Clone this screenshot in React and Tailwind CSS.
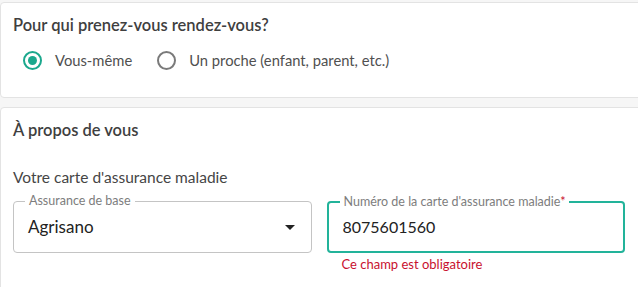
import React from 'react';

const Radio = ({ checked, label }) => (
  <label className="flex items-center gap-[13px]">
    <span className={"flex h-[19px] w-[19px] items-center justify-center rounded-full border-2 " + (checked ? "border-[#1ba88d]" : "border-[#7a7a7a]")}>
      {checked && <span className="h-[9px] w-[9px] rounded-full bg-[#1ba88d]" />}
    </span>
    <span className="text-[14.75px] text-[#505050]">{label}</span>
  </label>
);

const OutlinedField = ({ label, required, focused, children }) => (
  <div className="flex-1">
    <div className={"relative flex h-[52px] items-center rounded-[4px] px-[14px] " + (focused ? "border-2 border-[#22b39a]" : "border border-[#c4c4c4]")}>
      <span className="absolute left-[11px] top-[-9px] bg-white px-[4px] text-[12.5px] leading-[16px] text-[#7d7d7d]">
        {label}
        {required && <span className="text-[#c8102e]">*</span>}
      </span>
      {children}
    </div>
  </div>
);

const App = () => {
  return (
    <div className="h-[287px] w-[638px] overflow-hidden bg-[#f6f6f6] pt-[2px] font-['Lato',sans-serif]">
      <div className="mr-[-12px] h-[96px] rounded-[4px] border border-[#e3e3e3] bg-white px-[12px] pt-[10px]">
        <h2 className="text-[16.5px] font-semibold leading-[24px] text-[#3f3f3f]">Pour qui prenez-vous rendez-vous?</h2>
        <div className="mt-[12px] flex items-center gap-[25px] pl-[10px]">
          <Radio checked label="Vous-même" />
          <Radio label="Un proche (enfant, parent, etc.)" />
        </div>
      </div>

      <div className="mr-[-12px] mt-[9px] h-[200px] rounded-[4px] border border-[#e3e3e3] bg-white px-[12px] pt-[10px]">
        <h2 className="text-[16.5px] font-semibold leading-[24px] text-[#3f3f3f]">À propos de vous</h2>
        <p className="mt-[23px] text-[15.5px] leading-[24px] text-[#454545]">Votre carte d'assurance maladie</p>
        <div className="mt-[12px] flex w-[612px] gap-[15px]">
          <OutlinedField label="Assurance de base">
            <span className="flex-1 text-[17px] text-[#222]">Agrisano</span>
            <svg width="10" height="5" viewBox="0 0 10 5" className="mr-[2px]">
              <path d="M0 0h10L5 5z" fill="#222" />
            </svg>
          </OutlinedField>
          <div className="flex-1">
            <OutlinedField label="Numéro de la carte d'assurance maladie" required focused>
              <span className="text-[16px] text-[#222]">8075601560</span>
            </OutlinedField>
            <p className="mt-[3px] pl-[15px] text-[13px] leading-[16px] text-[#c8102e]">Ce champ est obligatoire</p>
          </div>
        </div>
      </div>
    </div>
  );
};

export default App;
